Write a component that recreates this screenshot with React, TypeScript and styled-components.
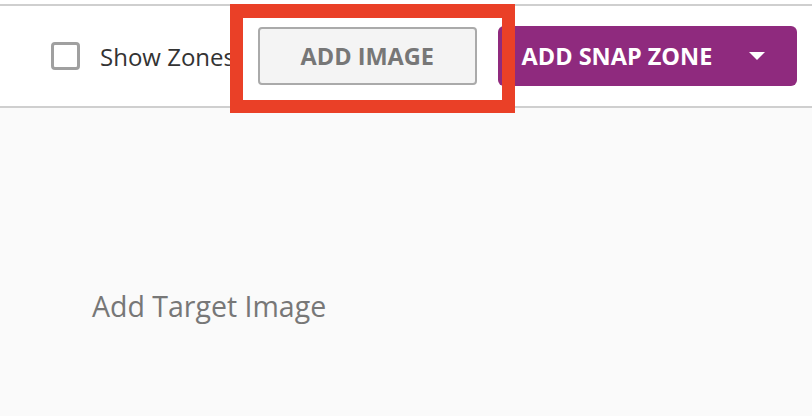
import React from 'react';
import styled, { createGlobalStyle } from 'styled-components';

const GlobalStyle = createGlobalStyle`
    html, body {
        margin: 0;
        padding: 0;
        background: #fafafa;
        font-family: 'Open Sans', 'Liberation Sans', sans-serif;
    }
`;

const StyledPage = styled.div`
    position: relative;
    width: 812px;
    height: 416px;
    overflow: hidden;
    background: #fafafa;
    padding-top: 4px;
    box-sizing: border-box;
    background-image: linear-gradient(#fff, #fff);
    background-size: 100% 4px;
    background-repeat: no-repeat;
`;

const StyledToolbar = styled.div`
    display: flex;
    align-items: center;
    height: 100px;
    padding: 0 15px 0 51px;
    background: #fff;
    border-top: 2px solid #cfcfcf;
    border-bottom: 2px solid #cfcfcf;
`;

const StyledCheckLabel = styled.label`
    display: flex;
    align-items: center;
    gap: 20px;
    font-size: 24px;
    color: #333;
    width: 207px;
    overflow: hidden;
    white-space: nowrap;
    flex-shrink: 0;
`;

const StyledCheckbox = styled.span`
    width: 29px;
    height: 28px;
    box-sizing: border-box;
    border: 3px solid #a0a0a0;
    border-radius: 4px;
    flex-shrink: 0;
`;

const StyledButton = styled.button<{ $primary?: boolean }>`
    display: flex;
    align-items: center;
    height: ${(p) => (p.$primary ? '60px' : '58px')};
    box-sizing: border-box;
    font-family: inherit;
    font-size: 23.5px;
    font-weight: 700;
    text-transform: uppercase;
    border-radius: ${(p) => (p.$primary ? '6px' : '4px')};
    border: ${(p) => (p.$primary ? 'none' : '2px solid #aaa')};
    background: ${(p) => (p.$primary ? '#8f2a7e' : '#f4f4f4')};
    color: ${(p) => (p.$primary ? '#fff' : '#777')};
    padding: 0;
    cursor: pointer;
`;

const StyledAddImage = styled(StyledButton)`
    width: 219px;
    justify-content: center;
    margin-right: 21px;
`;

const StyledSnapZone = styled(StyledButton)`
    width: 300px;
    padding: 0 32px 0 24px;
    justify-content: space-between;
`;

const StyledCaret = styled.span`
    width: 0;
    height: 0;
    border-left: 8px solid transparent;
    border-right: 8px solid transparent;
    border-top: 8px solid #fff;
`;

const StyledCanvas = styled.div`
    padding: 179px 0 0 92px;
    font-size: 28.5px;
    color: #777;
`;

const StyledHighlight = styled.div`
    position: absolute;
    left: 230px;
    top: 4px;
    width: 285px;
    height: 109px;
    box-sizing: border-box;
    border: 14px solid #ea4027;
    border-left-width: 13px;
    border-right-width: 13px;
    border-bottom-width: 13px;
    pointer-events: none;
`;

export default function App() {
    return (
        <>
            <GlobalStyle />
            <StyledPage>
                <StyledToolbar>
                    <StyledCheckLabel>
                        <StyledCheckbox />
                        Show Zones
                    </StyledCheckLabel>
                    <StyledAddImage>Add Image</StyledAddImage>
                    <StyledSnapZone $primary>
                        Add Snap Zone
                        <StyledCaret />
                    </StyledSnapZone>
                </StyledToolbar>
                <StyledCanvas>Add Target Image</StyledCanvas>
                <StyledHighlight />
            </StyledPage>
        </>
    );
}
